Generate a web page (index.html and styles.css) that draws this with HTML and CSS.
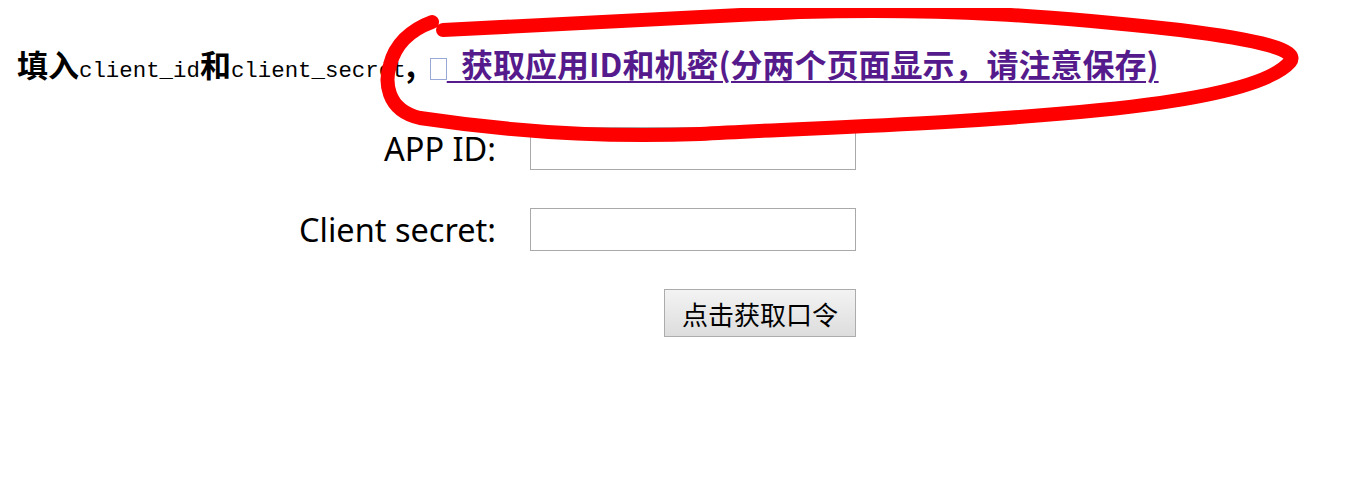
FILE: index.html
```html
<!DOCTYPE html>
<html lang="zh-CN">
<head>
<meta charset="utf-8">
<title>获取口令</title>
<link rel="stylesheet" href="styles.css">
</head>
<body>
<h2 class="title">填入<code class="mono">client_id</code>和<code class="mono">client_secret</code>, <a class="applink" href="#"><span class="tofu"></span> 获取应用ID和机密(分两个页面显示，请注意保存)</a></h2>
<form class="form">
  <label class="label" for="appid">APP ID:</label>
  <input class="field" id="appid" type="text">
  <label class="label" for="secret">Client secret:</label>
  <input class="field" id="secret" type="text">
  <button class="btn" type="button">点击获取口令</button>
</form>
<svg class="scribble" width="1349" height="496" viewBox="0 0 1349 496" aria-hidden="true">
  <path d="M 443 30 C 600 22, 700 18, 800 12 C 950 8, 1050 16, 1180 30 C 1260 40, 1300 50, 1290 62 C 1270 85, 1200 100, 1100 110 C 950 125, 800 128, 700 134 C 600 138, 500 130, 420 118 C 385 110, 385 80, 390 65 C 395 45, 410 30, 432 22" fill="none" stroke="#ff0000" stroke-width="14" stroke-linecap="round" stroke-linejoin="round"/>
</svg>
</body>
</html>
```
FILE: styles.css
```css
html, body {
  background: #ffffff;
}
body {
  margin: 8px;
  position: relative;
  font-family: "Noto Sans", "Noto Sans CJK SC", sans-serif;
  color: #000;
}
.title {
  margin: 0;
  padding: 35px 0 0 9px;
  font-family: "Noto Sans CJK SC", sans-serif;
  font-size: 31px;
  font-weight: bold;
  line-height: 40px;
  white-space: nowrap;
  word-spacing: 7px;
}
.mono {
  font-family: "Liberation Mono", monospace;
  font-size: 22.4px;
  font-weight: normal;
}
.applink {
  color: #551a8b;
  font-size: 32px;
  text-decoration: underline;
  text-decoration-thickness: 2px;
  text-underline-offset: 4px;
}
.tofu {
  display: inline-block;
  width: 15px;
  height: 20px;
  border: 1px solid #9aa8d8;
  vertical-align: -3px;
}
.form {
  display: grid;
  grid-template-columns: 488px 326px;
  column-gap: 34px;
  row-gap: 38px;
  align-items: center;
  margin-top: 36px;
}
.label {
  justify-self: end;
  font-family: "Noto Sans", sans-serif;
  font-size: 32.5px;
  line-height: 43px;
}
.field {
  box-sizing: border-box;
  width: 326px;
  height: 43px;
  margin: 0;
  border: 1px solid #a9a9a9;
  background: #fff;
}
.btn {
  grid-column: 2;
  justify-self: end;
  box-sizing: border-box;
  width: 192px;
  height: 48px;
  margin: 0;
  border: 1px solid #acacac;
  border-radius: 0;
  background: linear-gradient(#f3f3f3, #dddddd);
  font-family: "Noto Sans CJK SC", sans-serif;
  font-size: 26px;
  color: #000;
  padding: 0;
}
.scribble {
  position: absolute;
  left: -8px;
  top: -8px;
  pointer-events: none;
}
```
